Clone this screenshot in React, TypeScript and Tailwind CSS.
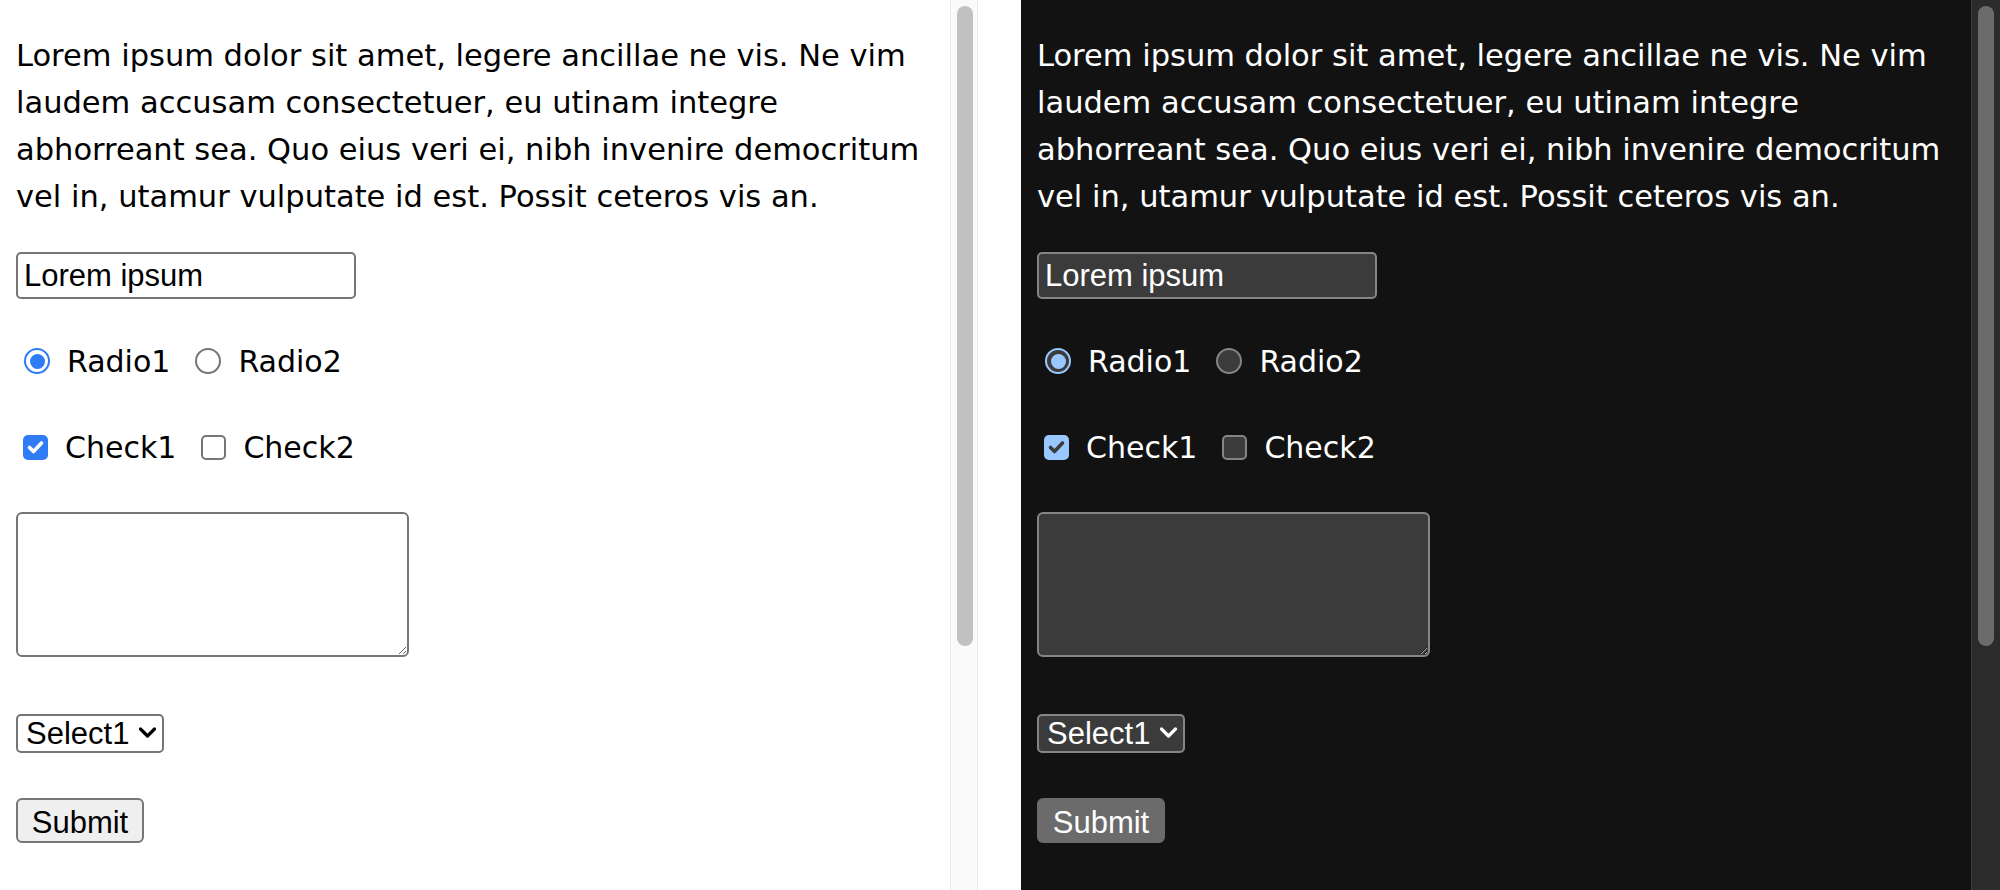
import React from 'react';

const TEXT = "font-['DejaVu_Sans',sans-serif]";
const CTRL = "font-['Liberation_Sans',Arial,sans-serif]";

const Check = ({ color }: { color: string }) => (
  <svg width="25" height="25" viewBox="0 0 25 25" fill="none">
    <path d="M6.5 12.5 L10.5 16.5 L18.5 8" stroke={color} strokeWidth="3.6" strokeLinecap="round" strokeLinejoin="round" />
  </svg>
);

const Scrollbar = ({ dark }: { dark: boolean }) => (
  <div
    className={
      dark
        ? 'w-[29px] h-full shrink-0 bg-[#2b2b2b] border-l border-[#3e3e3e] pl-[6px] pt-[6px]'
        : 'w-[28px] h-full shrink-0 bg-[#fafafa] border-l border-r border-[#ececec] pl-[6px] pt-[6px]'
    }
  >
    <div className={dark ? 'w-[16px] h-[640px] rounded-full bg-[#6b6b6b]' : 'w-[16px] h-[640px] rounded-full bg-[#c1c1c1]'} />
  </div>
);

function Panel({ dark }: { dark: boolean }) {
  const fg = dark ? 'text-white' : 'text-black';
  const field = dark
    ? 'bg-[#3b3b3b] border-2 border-[#858585] text-white'
    : 'bg-white border-2 border-[#767676] text-black';

  return (
    <div className={`w-[950px] shrink-0 h-full px-[16px] pt-[32px] ${dark ? 'bg-[#121212]' : 'bg-white'} ${fg}`}>
      <p className={`${TEXT} text-[30.5px] leading-[47px] whitespace-nowrap`}>
        Lorem ipsum dolor sit amet, legere ancillae ne vis. Ne vim
        <br />
        laudem accusam consectetuer, eu utinam integre
        <br />
        abhorreant sea. Quo eius veri ei, nibh invenire democritum
        <br />
        vel in, utamur vulputate id est. Possit ceteros vis an.
      </p>

      <input
        type="text"
        defaultValue="Lorem ipsum"
        className={`${CTRL} block mt-[32px] w-[340px] h-[47px] rounded-[5px] px-[6px] text-[31px] outline-none ${field}`}
      />

      <div className={`${TEXT} flex items-center h-[48px] mt-[38px] text-[30px]`}>
        {dark ? (
          <span className="ml-[8px] w-[26px] h-[26px] rounded-full border-2 border-[#99c8ff] bg-[#3b3b3b] flex items-center justify-center">
            <span className="w-[15px] h-[15px] rounded-full bg-[#99c8ff]" />
          </span>
        ) : (
          <span className="ml-[8px] w-[26px] h-[26px] rounded-full border-2 border-[#2f7cf6] bg-white flex items-center justify-center">
            <span className="w-[15px] h-[15px] rounded-full bg-[#2f7cf6]" />
          </span>
        )}
        <span className="ml-[17px]">Radio1</span>
        <span
          className={
            dark
              ? 'ml-[25px] w-[26px] h-[26px] rounded-full border-2 border-[#858585] bg-[#3b3b3b]'
              : 'ml-[25px] w-[26px] h-[26px] rounded-full border-2 border-[#767676] bg-white'
          }
        />
        <span className="ml-[17px]">Radio2</span>
      </div>

      <div className={`${TEXT} flex items-center h-[48px] mt-[38px] text-[30px]`}>
        <span className={`ml-[7px] w-[25px] h-[25px] rounded-[5px] flex items-center justify-center ${dark ? 'bg-[#99c8ff]' : 'bg-[#2f7cf6]'}`}>
          <Check color={dark ? '#3b3b3b' : '#ffffff'} />
        </span>
        <span className="ml-[17px]">Check1</span>
        <span
          className={
            dark
              ? 'ml-[25px] w-[25px] h-[25px] rounded-[5px] border-2 border-[#858585] bg-[#3b3b3b]'
              : 'ml-[25px] w-[25px] h-[25px] rounded-[5px] border-2 border-[#767676] bg-white'
          }
        />
        <span className="ml-[17px]">Check2</span>
      </div>

      <textarea
        className={`block mt-[41px] w-[393px] h-[145px] rounded-[6px] outline-none ${field} ${dark ? '[color-scheme:dark]' : '[color-scheme:light]'}`}
      />

      <div className="relative w-[148px] mt-[57px]">
        <select
          className={`${CTRL} block appearance-none w-[148px] h-[39px] rounded-[5px] pl-[8px] text-[31px] leading-none outline-none ${field}`}
        >
          <option>Select1</option>
          <option>Select2</option>
        </select>
        <svg
          className="absolute right-[7px] top-[12px] pointer-events-none"
          width="19"
          height="14"
          viewBox="0 0 19 14"
          fill="none"
        >
          <path d="M2.5 3 L9.5 10 L16.5 3" stroke={dark ? '#ffffff' : '#000000'} strokeWidth="3.2" strokeLinecap="round" strokeLinejoin="round" />
        </svg>
      </div>

      <button
        type="button"
        className={
          dark
            ? `${CTRL} block mt-[45px] w-[128px] h-[45px] rounded-[6px] border-2 border-[#6b6b6b] bg-[#6b6b6b] text-white text-[31px]`
            : `${CTRL} block mt-[45px] w-[128px] h-[45px] rounded-[6px] border-2 border-[#767676] bg-[#efefef] text-black text-[31px]`
        }
      >
        Submit
      </button>
    </div>
  );
}

export default function App() {
  return (
    <div className="flex w-[2000px] h-[890px] overflow-hidden bg-white">
      <div className="flex shrink-0 h-full">
        <Panel dark={false} />
        <Scrollbar dark={false} />
      </div>
      <div className="w-[43px] shrink-0 bg-white" />
      <div className="flex shrink-0 h-full bg-[#121212]">
        <Panel dark />
        <Scrollbar dark />
      </div>
    </div>
  );
}
